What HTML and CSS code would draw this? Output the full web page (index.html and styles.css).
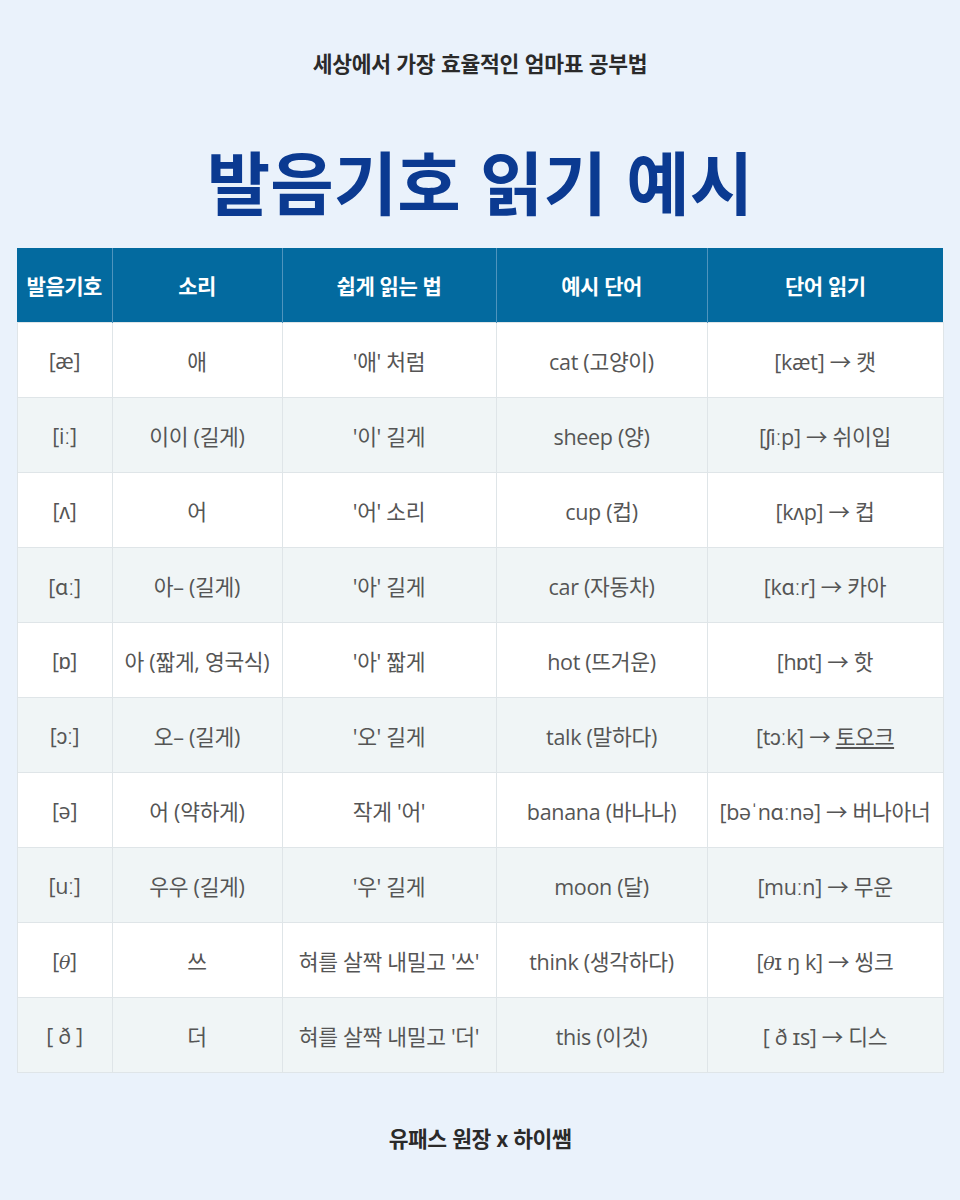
FILE: index.html
```html
<!DOCTYPE html>
<html lang="ko">
<head>
<meta charset="utf-8">
<title>발음기호 읽기 예시</title>
<link rel="stylesheet" href="styles.css">
</head>
<body>
<main class="page">
  <p class="subtitle">세상에서 가장 효율적인 엄마표 공부법</p>
  <h1 class="title">발음기호 읽기 예시</h1>
  <table class="chart">
    <colgroup>
      <col class="c1"><col class="c2"><col class="c3"><col class="c4"><col class="c5">
    </colgroup>
    <thead>
      <tr><th>발음기호</th><th>소리</th><th>쉽게 읽는 법</th><th>예시 단어</th><th>단어 읽기</th></tr>
    </thead>
    <tbody>
      <tr><td>[æ]</td><td>애</td><td>'애' 처럼</td><td>cat (고양이)</td><td>[kæt] → 캣</td></tr>
      <tr><td>[iː]</td><td>이이 (길게)</td><td>'이' 길게</td><td>sheep (양)</td><td>[ʃiːp] → 쉬이입</td></tr>
      <tr><td>[ʌ]</td><td>어</td><td>'어' 소리</td><td>cup (컵)</td><td>[kʌp] → 컵</td></tr>
      <tr><td>[ɑː]</td><td>아– (길게)</td><td>'아' 길게</td><td>car (자동차)</td><td>[kɑːr] → 카아</td></tr>
      <tr><td>[ɒ]</td><td>아 (짧게, 영국식)</td><td>'아' 짧게</td><td>hot (뜨거운)</td><td>[hɒt] → 핫</td></tr>
      <tr><td>[ɔː]</td><td>오– (길게)</td><td>'오' 길게</td><td>talk (말하다)</td><td>[tɔːk] → <u>토오크</u></td></tr>
      <tr><td>[ə]</td><td>어 (약하게)</td><td>작게 '어'</td><td>banana (바나나)</td><td>[bəˈnɑːnə] → 버나아너</td></tr>
      <tr><td>[uː]</td><td>우우 (길게)</td><td>'우' 길게</td><td>moon (달)</td><td>[muːn] → 무운</td></tr>
      <tr><td>[<i>θ</i>]</td><td>쓰</td><td>혀를 살짝 내밀고 '쓰'</td><td>think (생각하다)</td><td>[<i>θ</i>ɪ ŋ k] → 씽크</td></tr>
      <tr><td>[ ð ]</td><td>더</td><td>혀를 살짝 내밀고 '더'</td><td>this (이것)</td><td>[ ð ɪs] → 디스</td></tr>
    </tbody>
  </table>
  <p class="footer">유패스 원장 x 하이쌤</p>
</main>
</body>
</html>
```

FILE: styles.css
```css
html, body {
  margin: 0;
  padding: 0;
}
body {
  background: #eaf2fb;
  font-family: "Open Sans", "Noto Sans CJK KR", sans-serif;
  color: #555;
}
.page {
  width: 960px;
  height: 1200px;
  display: flex;
  flex-direction: column;
  align-items: center;
  box-sizing: border-box;
  padding-top: 48px;
}
.subtitle {
  margin: 0;
  font-family: "Noto Sans CJK KR", sans-serif;
  font-weight: 700;
  font-size: 21.5px;
  line-height: 30px;
  color: #2a2a2a;
  letter-spacing: -0.3px;
}
.title {
  margin: 59px 0 0;
  font-family: "Noto Sans CJK KR", sans-serif;
  font-weight: 700;
  font-size: 69px;
  line-height: 86px;
  color: #0b3a91;
  letter-spacing: 0;
}
.chart {
  margin-top: 25px;
  width: 926px;
  border-collapse: collapse;
  table-layout: fixed;
  font-size: 21.5px;
}
.c1 { width: 95px; }
.c2 { width: 170px; }
.c3 { width: 214px; }
.c4 { width: 211px; }
.c5 { width: 236px; }
.chart th {
  background: #036a9f;
  color: #fff;
  font-family: "Noto Sans CJK KR", sans-serif;
  font-weight: 700;
  font-size: 21px;
  height: 74px;
  padding: 0;
  border-left: 1px solid #4f94bd;
  letter-spacing: -0.5px;
}
.chart th:first-child { border-left: none; }
.chart td {
  height: 74px;
  padding: 0;
  text-align: center;
  border: 1px solid #dfe5e8;
  color: #555;
  white-space: nowrap;
  letter-spacing: -0.3px;
}
.chart tbody tr:nth-child(odd) td { background: #ffffff; }
.chart tbody tr:nth-child(even) td { background: #f0f5f6; }
.chart td i {
  font-family: "DejaVu Serif", serif;
  font-size: 19px;
}
.footer {
  margin: 50px 0 0;
  font-family: "Noto Sans CJK KR", sans-serif;
  font-weight: 700;
  font-size: 21.5px;
  line-height: 30px;
  color: #2a2a2a;
  letter-spacing: -0.5px;
}
```
